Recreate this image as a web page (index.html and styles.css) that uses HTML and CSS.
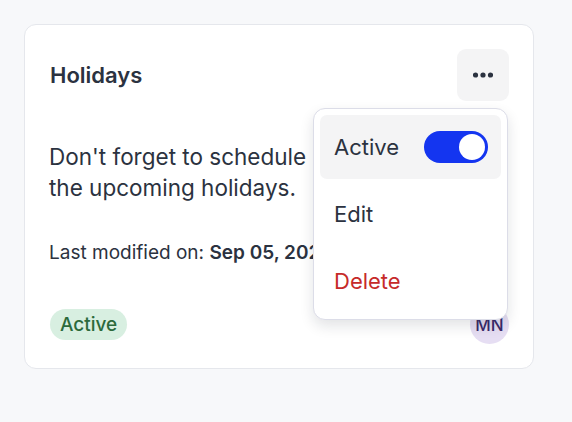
FILE: index.html
```html
<!DOCTYPE html>
<html>
	<head>
		<meta charset="utf-8">
		<title>Holidays</title>
		<link rel="stylesheet" href="styles.css">
	</head>
	<body>
		<div class="card">
			<div class="card-head">
				<h3 class="card-title">Holidays</h3>
				<div class="menu-wrap">
					<button class="menu-btn" type="button" aria-label="More">
						<svg width="20" height="6" viewBox="0 0 20 6"><circle cx="2.5" cy="3" r="2.6" fill="#2b3240"/><circle cx="10" cy="3" r="2.6" fill="#2b3240"/><circle cx="17.5" cy="3" r="2.6" fill="#2b3240"/></svg>
					</button>
					<ul class="dropdown">
						<li class="dropdown-item selected">
							<span>Active</span>
							<span class="toggle on"><span class="knob"></span></span>
						</li>
						<li class="dropdown-item">Edit</li>
						<li class="dropdown-item danger">Delete</li>
					</ul>
				</div>
			</div>
			<p class="card-text">Don't forget to schedule<br>the upcoming holidays.</p>
			<p class="card-meta">Last modified on: <b>Sep 05, 2024</b></p>
			<div class="card-foot">
				<span class="badge">Active</span>
				<span class="avatar">MN</span>
			</div>
		</div>
	</body>
</html>
```

FILE: styles.css
```css
*{
	margin:0;
	padding:0;
	box-sizing:border-box;
	list-style:none;
}
body{
	background:#f7f8fa;
	font-family:Inter, "Noto Sans", sans-serif;
	color:#2b3240;
	padding:24px;
}
.card{
	width:510px;
	background:#fff;
	border:1px solid #e5e7ec;
	border-radius:12px;
	padding:24px;
	display:flex;
	flex-direction:column;
}
.card-head{
	display:flex;
	justify-content:space-between;
	align-items:center;
	height:52px;
}
.card-title{
	font-size:22px;
	font-weight:600;
	padding-left:1px;
}
.menu-wrap{
	position:relative;
}
.menu-btn{
	width:52px;
	height:52px;
	border:none;
	border-radius:9px;
	background:#f4f4f5;
	display:flex;
	align-items:center;
	justify-content:center;
}
/* menu drops over the card */
.dropdown{
	position:absolute;
	top:59px;
	right:1px;
	width:195px;
	background:#fff;
	border:1px solid #dcdde8;
	border-radius:12px;
	box-shadow:0 6px 14px rgba(20,24,40,0.12);
	padding:6px;
	display:flex;
	flex-direction:column;
	gap:3px;
	z-index:2;
}
.dropdown-item{
	height:64px;
	display:flex;
	align-items:center;
	justify-content:space-between;
	padding:0 13px 0 14px;
	font-size:22px;
	border-radius:7px;
}
.dropdown-item.selected{
	background:#f4f4f5;
}
.dropdown-item.danger{
	color:#c62a2a;
}
.toggle{
	width:64px;
	height:32px;
	border-radius:16px;
	background:#c9ccd6;
	display:flex;
	align-items:center;
	padding:0 3px;
}
.toggle.on{
	background:#1435f0;
	justify-content:flex-end;
}
.knob{
	width:26px;
	height:26px;
	border-radius:50%;
	background:#fff;
}
.card-text{
	margin-top:40px;
	font-size:22.5px;
	line-height:31px;
}
.card-meta{
	margin-top:38px;
	font-size:19px;
	line-height:24px;
}
.card-meta b{
	font-weight:600;
}
.card-foot{
	margin-top:40px;
	display:flex;
	justify-content:space-between;
	align-items:center;
}
.badge{
	background:#d8efe1;
	color:#2c6a3c;
	font-size:19px;
	font-weight:500;
	line-height:31px;
	padding:0 10px;
	border-radius:16px;
	margin-left:1px;
}
.avatar{
	width:39px;
	height:39px;
	border-radius:50%;
	background:#e6def3;
	color:#3a2a6a;
	font-size:17px;
	font-weight:500;
	display:flex;
	align-items:center;
	justify-content:center;
}
```
